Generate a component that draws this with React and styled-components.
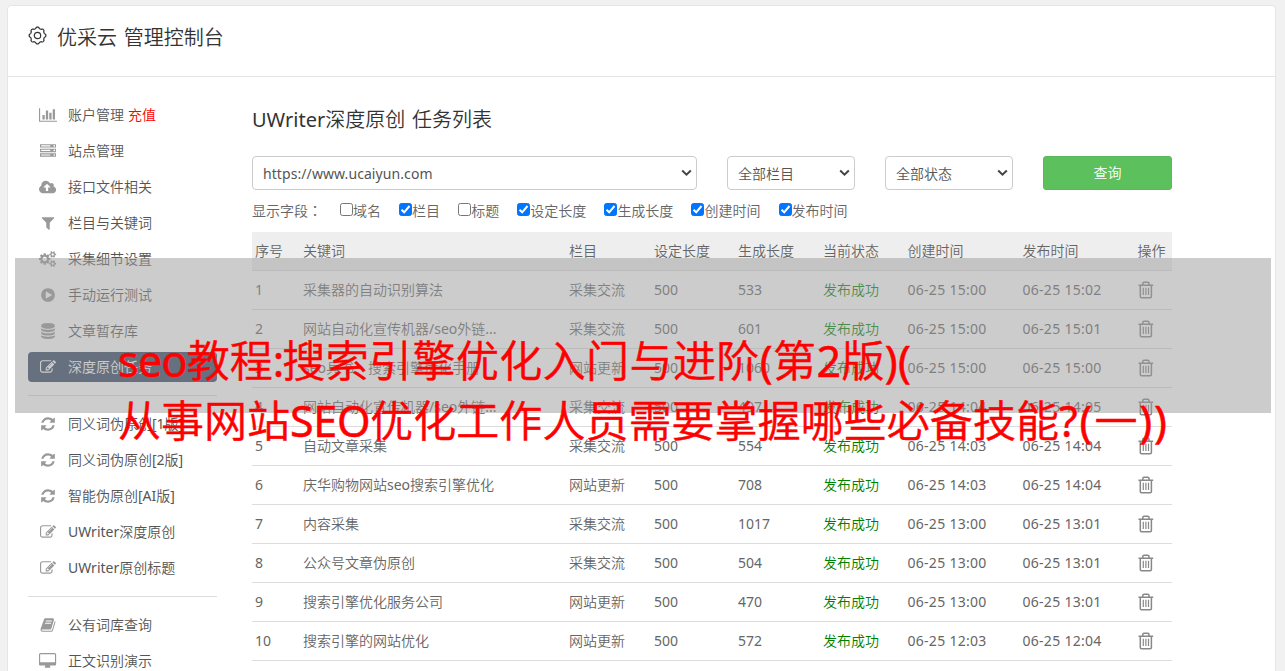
import React from 'react';
import styled, { createGlobalStyle } from 'styled-components';

const FONT = '"Noto Sans", "Noto Sans CJK SC DemiLight", "Noto Sans CJK SC", sans-serif';

const Global = createGlobalStyle`
  * { box-sizing: border-box; }
  html, body { margin: 0; height: 671px; overflow: hidden; }
  body {
    background: #f1f1f1;
    font-family: ${FONT};
    font-size: 14px;
    color: #666;
  }
`;

const Page = styled.div`
  position: relative;
  height: 671px;
  padding: 5px 9px 0 7px;
  overflow: hidden;
`;
const Card = styled.div`
  height: 700px;
  background: #fff;
  border: 1px solid #e5e5e5;
  border-radius: 4px;
`;
const Header = styled.header`
  display: flex;
  align-items: center;
  gap: 10px;
  height: 71px;
  padding: 0 0 11px 20px;
  border-bottom: 1px solid #e5e5e5;
  color: #333;
  font-size: 20px;
  word-spacing: 1.5px;
`;
const HeaderText = styled.span`
  padding-top: 2px;
`;
const Body = styled.div`
  display: flex;
`;
const Sidebar = styled.nav`
  width: 189px;
  margin: 23px 35px 0 20px;
  flex: none;
`;
const Item = styled.div`
  display: flex;
  align-items: center;
  height: 30px;
  margin-bottom: 6px;
  padding-left: 10px;
  border-radius: 4px;
  white-space: nowrap;
  line-height: 20px;
  color: ${(p) => (p.$active ? '#fff' : '#555')};
  background: ${(p) => (p.$active ? '#354765' : 'transparent')};
`;
const IconBox = styled.span`
  display: flex;
  justify-content: center;
  width: 20px;
  margin-right: 10px;
  color: ${(p) => (p.$active ? '#fff' : '#999')};
  svg { display: block; height: 16px; fill: currentColor; }
`;
const Recharge = styled.span`
  margin-left: 4px;
  color: #f00;
`;
const Rule = styled.div`
  height: 1px;
  margin: 13px 0;
  background: #ddd;
`;
const Main = styled.main`
  width: 920px;
  flex: none;
`;
const Title = styled.h1`
  margin: 28px 0 0;
  height: 30px;
  line-height: 30px;
  font-size: 20px;
  font-weight: 400;
  word-spacing: 1.5px;
  color: #333;
`;
const Filters = styled.div`
  display: grid;
  grid-template-columns: 445px 128px 128px 129px;
  column-gap: 30px;
  margin-top: 21px;
`;
const Select = styled.div`
  display: flex;
  align-items: center;
  justify-content: space-between;
  height: 34px;
  padding: 0 4px 0 10px;
  border: 1px solid #ccc;
  border-radius: 4px;
  color: #555;
`;
const Url = styled.span`
  letter-spacing: 0.08px;
`;
const Button = styled.button`
  height: 34px;
  padding: 0 0 2px;
  border: 1px solid #5cb85c;
  border-radius: 3px;
  background: #5cc05c;
  color: #fff;
  font: 400 14px ${FONT};
`;
const Fields = styled.div`
  display: flex;
  align-items: center;
  height: 20px;
  margin-top: 10px;
`;
const FieldsLabel = styled.span`
  width: 88px;
`;
const Colon = styled.span`
  font-family: "Noto Sans CJK TC", sans-serif;
`;
const Field = styled.label`
  display: flex;
  align-items: center;
  margin-right: 18.1px;
  white-space: nowrap;
`;
const Check = styled.span`
  display: block;
  width: 13px;
  height: 13px;
  margin-top: -1px;
  border: 1px solid ${(p) => (p.$on ? '#0075ff' : '#767676')};
  border-radius: 2.5px;
  background: ${(p) => (p.$on ? '#0075ff' : '#fff')};
  svg { display: block; }
`;
const Row = styled.div`
  display: grid;
  grid-template-columns: 48px 266px 85px 84px 85px 84.5px 115px 115px 30px;
  align-items: center;
  height: 39px;
  padding-left: 3px;
  border-bottom: 1px solid #ddd;
  white-space: nowrap;
  background: ${(p) => (p.$head ? '#eee' : 'transparent')};
  svg { display: block; }
`;
const Table = styled.div`
  margin-top: 12px;
`;
const Cell = styled.span`
  padding-bottom: 2px;
  color: ${(p) => (p.$ok ? '#008000' : 'inherit')};
`;
const DateCell = styled(Cell)`
  letter-spacing: 0.28px;
`;
const Banner = styled.div`
  position: absolute;
  left: 15px;
  top: 258px;
  width: 1256px;
  height: 155px;
  background: rgba(153, 153, 153, 0.5);
`;
const Caption = styled.div`
  position: absolute;
  left: 118px;
  top: 331px;
  color: #f00;
  font-size: 43px;
  line-height: 60px;
  white-space: nowrap;
  -webkit-text-stroke: 0.5px #f00;
`;
const CaptionLine = styled.div`
  width: max-content;
`;
const Run = styled.span`
  letter-spacing: ${(p) => p.$spacing}px;
`;

const GLYPHS = {
  chart: [2048, 'M640 896v512h-256v-512h256zm384-512v1024h-256v-1024h256zm1024 1152v128h-2048v-1536h128v1408h1920zm-640-896v768h-256v-768h256zm384-384v1152h-256v-1152h256z'],
  server: [1792, 'M128 1408h1024v-128h-1024v128zm0-512h1024v-128h-1024v128zm1568 448q0-40-28-68t-68-28-68 28-28 68 28 68 68 28 68-28 28-68zm-1568-960h1024v-128h-1024v128zm1568 448q0-40-28-68t-68-28-68 28-28 68 28 68 68 28 68-28 28-68zm0-512q0-40-28-68t-68-28-68 28-28 68 28 68 68 28 68-28 28-68zm96 832v384h-1792v-384h1792zm0-512v384h-1792v-384h1792zm0-512v384h-1792v-384h1792z'],
  cloud: [1920, 'M1280 928q0-14-9-23l-352-352q-9-9-23-9t-23 9l-351 351q-10 12-10 24 0 14 9 23t23 9h224v352q0 13 9.5 22.5t22.5 9.5h192q13 0 22.5-9.5t9.5-22.5v-352h224q13 0 22.5-9.5t9.5-22.5zm640 288q0 159-112.5 271.5t-271.5 112.5h-1088q-185 0-316.5-131.5t-131.5-316.5q0-130 70-240t188-165q-2-30-2-43 0-212 150-362t362-150q156 0 285.5 87t188.5 231q71-62 166-62 106 0 181 75t75 181q0 76-41 138 130 31 213.5 135.5t83.5 238.5z'],
  filter: [1792, 'M1595 295q17 41-14 70l-493 493v742q0 42-39 59-13 5-25 5-27 0-45-19l-256-256q-19-19-19-45v-486l-493-493q-31-29-14-70 17-39 59-39h1280q42 0 59 39z'],
  cogs: [1920, 'M896 896q0-106-75-181t-181-75-181 75-75 181 75 181 181 75 181-75 75-181zm768 512q0-52-38-90t-90-38-90 38-38 90q0 53 37.5 90.5t90.5 37.5 90.5-37.5 37.5-90.5zm0-1024q0-52-38-90t-90-38-90 38-38 90q0 53 37.5 90.5t90.5 37.5 90.5-37.5 37.5-90.5zm-384 421v185q0 10-7 19.5t-16 10.5l-155 24q-11 35-32 76 34 48 90 115 7 11 7 20 0 12-7 19-23 30-82.5 89.5t-78.5 59.5q-11 0-21-7l-115-90q-37 19-77 31-11 108-23 155-7 24-30 24h-186q-11 0-20-7.5t-10-17.5l-23-153q-34-10-75-31l-118 89q-7 7-20 7-11 0-21-8-144-133-144-160 0-9 7-19 10-14 41-53t47-61q-23-44-35-82l-152-24q-10-1-17-9.5t-7-19.5v-185q0-10 7-19.5t16-10.5l155-24q11-35 32-76-34-48-90-115-7-11-7-20 0-12 7-20 22-30 82-89t79-59q11 0 21 7l115 90q34-18 77-32 11-108 23-154 7-24 30-24h186q11 0 20 7.5t10 17.5l23 153q34 10 75 31l118-89q8-7 20-7 11 0 21 8 144 133 144 160 0 8-7 19-12 16-42 54t-45 60q23 48 34 82l152 23q10 2 17 10.5t7 19.5zm640 533v140q0 16-149 31-12 27-30 52 51 113 51 138 0 4-4 7-122 71-124 71-8 0-46-47t-52-68q-20 2-30 2t-30-2q-14 21-52 68t-46 47q-2 0-124-71-4-3-4-7 0-25 51-138-18-25-30-52-149-15-149-31v-140q0-16 149-31 13-29 30-52-51-113-51-138 0-4 4-7 4-2 35-20t59-34 30-16q8 0 46 46.5t52 67.5q20-2 30-2t30 2q51-71 92-112l6-2q4 0 124 70 4 3 4 7 0 25-51 138 17 23 30 52 149 15 149 31zm0-1024v140q0 16-149 31-12 27-30 52 51 113 51 138 0 4-4 7-122 71-124 71-8 0-46-47t-52-68q-20 2-30 2t-30-2q-14 21-52 68t-46 47q-2 0-124-71-4-3-4-7 0-25 51-138-18-25-30-52-149-15-149-31v-140q0-16 149-31 13-29 30-52-51-113-51-138 0-4 4-7 4-2 35-20t59-34 30-16q8 0 46 46.5t52 67.5q20-2 30-2t30 2q51-71 92-112l6-2q4 0 124 70 4 3 4 7 0 25-51 138 17 23 30 52 149 15 149 31z'],
  play: [1792, 'M896 128q209 0 385.5 103t279.5 279.5 103 385.5-103 385.5-279.5 279.5-385.5 103-385.5-103-279.5-279.5-103-385.5 103-385.5 279.5-279.5 385.5-103zm384 823q32-18 32-55t-32-55l-544-320q-31-19-64-1-32 19-32 56v640q0 37 32 56 16 8 32 8 17 0 32-9z'],
  database: [1792, 'M896 768q237 0 443-43t325-127v170q0 69-103 128t-280 93.5-385 34.5-385-34.5-280-93.5-103-128v-170q119 84 325 127t443 43zm0 768q237 0 443-43t325-127v170q0 69-103 128t-280 93.5-385 34.5-385-34.5-280-93.5-103-128v-170q119 84 325 127t443 43zm0-384q237 0 443-43t325-127v170q0 69-103 128t-280 93.5-385 34.5-385-34.5-280-93.5-103-128v-170q119 84 325 127t443 43zm0-1152q208 0 385 34.5t280 93.5 103 128v128q0 69-103 128t-280 93.5-385 34.5-385-34.5-280-93.5-103-128v-128q0-69 103-128t280-93.5 385-34.5z'],
  edit: [1792, 'M888 1184l116-116-152-152-116 116v56h96v96h56zm440-720q-16-16-33 1l-350 350q-17 17-1 33t33-1l350-350q17-17 1-33zm80 594v190q0 119-84.5 203.5t-203.5 84.5h-832q-119 0-203.5-84.5t-84.5-203.5v-832q0-119 84.5-203.5t203.5-84.5h832q63 0 117 25 15 7 18 23 3 17-9 29l-49 49q-14 14-32 8-23-6-45-6h-832q-66 0-113 47t-47 113v832q0 66 47 113t113 47h832q66 0 113-47t47-113v-126q0-13 9-22l64-64q15-15 35-7t20 29zm-96-738l288 288-672 672h-288v-288zm444 132l-92 92-288-288 92-92q28-28 68-28t68 28l152 152q28 28 28 68t-28 68z'],
  refresh: [1792, 'M1639 1056q0 5-1 7-64 268-268 434.5t-478 166.5q-146 0-282.5-55t-243.5-157l-129 129q-19 19-45 19t-45-19-19-45v-448q0-26 19-45t45-19h448q26 0 45 19t19 45-19 45l-137 137q71 66 161 102t187 36q134 0 250-65t186-179q11-17 53-117 8-23 30-23h192q13 0 22.5 9.5t9.5 22.5zm25-800v448q0 26-19 45t-45 19h-448q-26 0-45-19t-19-45 19-45l138-138q-148-137-349-137-134 0-250 65t-186 179q-11 17-53 117-8 23-30 23h-199q-13 0-22.5-9.5t-9.5-22.5v-7q65-268 270-434.5t480-166.5q146 0 284 55.5t245 156.5l130-129q19-19 45-19t45 19 19 45z'],
  book: [1792, 'M1703 478q40 57 18 129l-275 906q-19 64-76.5 107.5t-122.5 43.5h-923q-77 0-148.5-53.5t-99.5-131.5q-24-67-2-127 0-4 3-27t4-37q1-8-3-21.5t-3-19.5q2-11 8-21t16.5-23.5 16.5-23.5q23-38 45-91.5t30-91.5q3-10 .5-30t-.5-28q3-11 17-28t17-23q21-36 42-92t25-90q1-9-2.5-32t.5-28q4-13 22-30.5t22-22.5q19-26 42.5-84.5t27.5-96.5q1-8-3-25.5t-2-26.5q2-8 9-18t18-23 17-21q8-12 16.5-30.5t15-35 16-36 19.5-32 26.5-23.5 36-11.5 47.5 5.5l-1 3q38-9 51-9h761q74 0 114 56t18 130l-274 906q-36 119-71.5 153.5t-128.5 34.5h-869q-27 0-38 15-11 16-1 43 24 70 144 70h923q29 0 56-15.5t35-41.5l300-987q7-22 5-57 38 15 59 43zm-1064 2q-4 13 2 22.5t20 9.5h608q13 0 25.5-9.5t16.5-22.5l21-64q4-13-2-22.5t-20-9.5h-608q-13 0-25.5 9.5t-16.5 22.5zm-83 256q-4 13 2 22.5t20 9.5h608q13 0 25.5-9.5t16.5-22.5l21-64q4-13-2-22.5t-20-9.5h-608q-13 0-25.5 9.5t-16.5 22.5z'],
  desktop: [1920, 'M1792 992v-832q0-13-9.5-22.5t-22.5-9.5h-1600q-13 0-22.5 9.5t-9.5 22.5v832q0 13 9.5 22.5t22.5 9.5h1600q13 0 22.5-9.5t9.5-22.5zm128-832v1088q0 66-47 113t-113 47h-544q0 37 16 77.5t32 71 16 43.5q0 26-19 45t-45 19h-512q-26 0-45-19t-19-45q0-14 16-44t32-70 16-78h-544q-66 0-113-47t-47-113v-1088q0-66 47-113t113-47h1600q66 0 113 47t47 113z'],
};

const Glyph = ({ name }) => {
  const [w, d] = GLYPHS[name];
  return (
    <svg viewBox={`0 0 ${w} 1792`} width={(w / 1792) * 16} height="16">
      <path d={d} />
    </svg>
  );
};

const gearPath = () => {
  const pts = [];
  for (let i = 0; i <= 96; i += 1) {
    const a = (i / 96) * Math.PI * 2;
    const r = 7.7 + 0.65 * Math.tanh(2 * Math.cos(8 * a));
    pts.push(`${(9.5 + r * Math.sin(a)).toFixed(2)} ${(9.5 - r * Math.cos(a)).toFixed(2)}`);
  }
  return `M${pts.join('L')}Z`;
};
const Gear = () => (
  <svg width="19" height="19" viewBox="0 0 19 19" fill="none" stroke="#333" strokeWidth="1.2">
    <path d={gearPath()} />
    <circle cx="9.5" cy="9.5" r="3.2" />
  </svg>
);
const Trash = () => (
  <svg width="16" height="18" viewBox="0 0 16 18" fill="none" stroke="#888" strokeWidth="1.5">
    <path d="M0.5 4.2H15.2M4.8 4V2.4Q4.8 1.2 6 1.2H9.8Q11 1.2 11 2.4V4M2.3 4.2V15.6Q2.3 16.8 3.5 16.8H12.2Q13.4 16.8 13.4 15.6V4.2" />
    <path d="M5.3 6.8V14M7.9 6.8V14M10.5 6.8V14" strokeWidth="1.2" />
  </svg>
);
const Chevron = () => (
  <svg width="11" height="8" viewBox="0 0 11 8" fill="none" stroke="#444" strokeWidth="2">
    <path d="M1.2 1.5L5.5 5.6L9.8 1.5" />
  </svg>
);

const MENU = [
  ['chart', '账户管理', '充值'],
  ['server', '站点管理'],
  ['cloud', '接口文件相关'],
  ['filter', '栏目与关键词'],
  ['cogs', '采集细节设置'],
  ['play', '手动运行测试'],
  ['database', '文章暂存库'],
  ['edit', '深度原创任务'],
  null,
  ['refresh', '同义词伪原创[1版]'],
  ['refresh', '同义词伪原创[2版]'],
  ['refresh', '智能伪原创[AI版]'],
  ['edit', 'UWriter深度原创'],
  ['edit', 'UWriter原创标题'],
  null,
  ['book', '公有词库查询'],
  ['desktop', '正文识别演示'],
];
const FIELDS = [
  ['域名', false], ['栏目', true], ['标题', false], ['设定长度', true],
  ['生成长度', true], ['创建时间', true], ['发布时间', true],
];
const HEAD = ['序号', '关键词', '栏目', '设定长度', '生成长度', '当前状态', '创建时间', '发布时间', '操作'];
const ROWS = [
  ['采集器的自动识别算法', '采集交流', '533', '15:00', '15:02'],
  ['网站自动化宣传机器/seo外链...', '采集交流', '601', '15:00', '15:01'],
  ['seo兵书：搜索引擎优化手册', '网站更新', '1060', '15:00', '15:00'],
  ['网站自动化宣传机器/seo外链...', '采集交流', '497', '14:04', '14:05'],
  ['自动文章采集', '采集交流', '554', '14:03', '14:04'],
  ['庆华购物网站seo搜索引擎优化', '网站更新', '708', '14:03', '14:04'],
  ['内容采集', '采集交流', '1017', '13:00', '13:01'],
  ['公众号文章伪原创', '采集交流', '504', '13:00', '13:01'],
  ['搜索引擎优化服务公司', '网站更新', '470', '13:00', '13:01'],
  ['搜索引擎的网站优化', '网站更新', '572', '12:03', '12:04'],
];

export default function App() {
  return (
    <Page>
      <Global />
      <Card>
        <Header><Gear /><HeaderText>优采云 管理控制台</HeaderText></Header>
        <Body>
          <Sidebar>
            {MENU.map((m, i) => {
              if (!m) return <Rule key={i} />;
              const active = i === 7;
              return (
                <Item key={i} $active={active}>
                  <IconBox $active={active}><Glyph name={m[0]} /></IconBox>
                  {m[1]}
                  {m[2] && <Recharge>{m[2]}</Recharge>}
                </Item>
              );
            })}
          </Sidebar>
          <Main>
            <Title>UWriter深度原创 任务列表</Title>
            <Filters>
              <Select><Url>https://www.ucaiyun.com</Url><Chevron /></Select>
              <Select>全部栏目<Chevron /></Select>
              <Select>全部状态<Chevron /></Select>
              <Button>查询</Button>
            </Filters>
            <Fields>
              <FieldsLabel>显示字段<Colon>：</Colon></FieldsLabel>
              {FIELDS.map(([name, on]) => (
                <Field key={name}>
                  <Check $on={on}>
                    {on && (
                      <svg width="11" height="11" viewBox="0 0 11 11" fill="none" stroke="#fff" strokeWidth="2">
                        <path d="M1.5 5.8L4.2 8.3L9.5 2" />
                      </svg>
                    )}
                  </Check>
                  {name}
                </Field>
              ))}
            </Fields>
            <Table>
              <Row $head>{HEAD.map((h) => <Cell key={h}>{h}</Cell>)}</Row>
              {ROWS.map(([kw, col, len, a, b], i) => (
                <Row key={i}>
                  <Cell>{i + 1}</Cell>
                  <Cell>{kw}</Cell>
                  <Cell>{col}</Cell>
                  <Cell>500</Cell>
                  <Cell>{len}</Cell>
                  <Cell $ok>发布成功</Cell>
                  <DateCell>06-25 {a}</DateCell>
                  <DateCell>06-25 {b}</DateCell>
                  <Trash />
                </Row>
              ))}
            </Table>
          </Main>
        </Body>
      </Card>
      <Banner />
      <Caption>
        <CaptionLine>
          <Run $spacing={-0.7}>seo</Run>
          <Run $spacing={0}>教程</Run>
          <Run $spacing={-2}>:</Run>
          <Run $spacing={0.4}>搜索引擎优化入门与进阶(第2版)(</Run>
        </CaptionLine>
        <CaptionLine>
          <Run $spacing={0}>从事网站</Run>
          <Run $spacing={-0.3}>SEO</Run>
          <Run $spacing={0.05}>优化工作人员需要掌握哪些必备技能</Run>
          <Run $spacing={1.9}>?(一))</Run>
        </CaptionLine>
      </Caption>
    </Page>
  );
}
